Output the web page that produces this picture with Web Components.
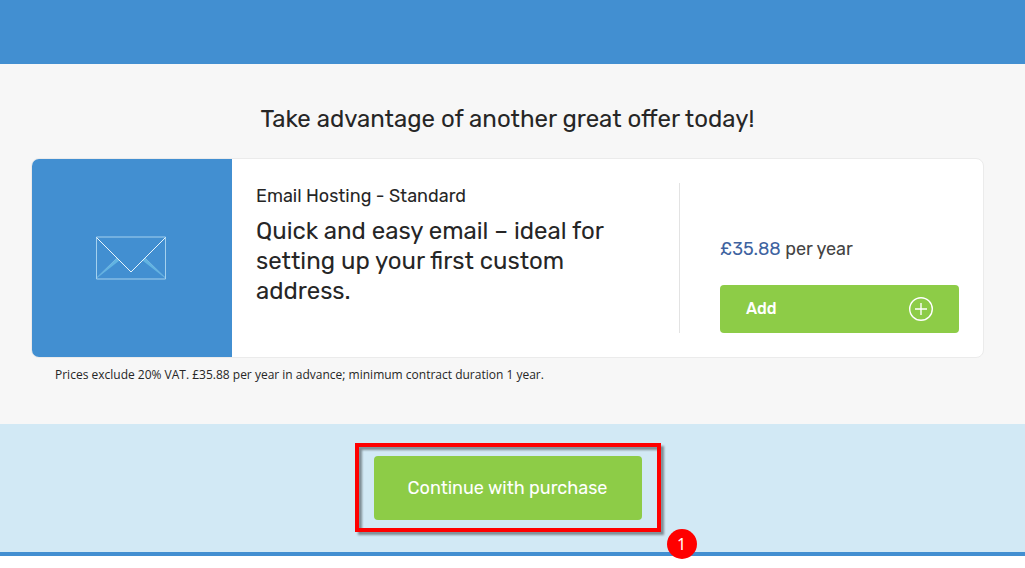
<!DOCTYPE html>
<html lang="en">
<head>
<meta charset="utf-8">
<meta name="viewport" content="width=device-width, initial-scale=1">
<title>Special offer</title>
<style>
body { margin: 0; min-height: 100vh; background: #fff; color: #262626; font-family: Rubik, Roboto, "Liberation Sans", sans-serif; }
</style>
</head>
<body>
<offer-page></offer-page>

<template id="offer-page">
  <style>
    :host { display: block; --blue: #428fd1; --green: #8dcc47; }
    header { height: 64px; background: var(--blue); }
    main { padding: 40px 41px 40px 31px; background: #f7f7f7; }
    h1 { margin: 0 0 24px; font-size: 24px; line-height: 30px; font-weight: 400; text-align: center; }
    small { display: block; margin: 8px 24px 0; font: 12px/18px "Open Sans", sans-serif; }
    footer { display: flex; justify-content: center; padding: 32px 41px 32px 31px; background: #d2e9f5; border-bottom: 4px solid var(--blue); }
  </style>
  <header></header>
  <main>
    <h1>Take advantage of another great offer today!</h1>
    <offer-card>
      <span slot="name">Email Hosting - Standard</span>
      <span slot="pitch">Quick and easy email – ideal for setting up your first custom address.</span>
      <span slot="price">£35.88</span>
    </offer-card>
    <small>Prices exclude 20% VAT. £35.88 per year in advance; minimum contract duration 1 year.</small>
  </main>
  <footer>
    <step-callout step="1"><continue-button>Continue with purchase</continue-button></step-callout>
  </footer>
</template>

<template id="offer-card">
  <style>
    :host { display: flex; min-height: 198px; background: #fff; border: 1px solid #ebebeb; border-radius: 8px; overflow: hidden; }
    .art { flex: 0 0 200px; display: flex; align-items: center; justify-content: center; background: var(--blue); }
    .art svg { display: block; margin-right: 2px; }
    .text { flex: 1; padding: 24px 64px 24px 24px; }
    h2, p { margin: 0; font-weight: 400; }
    h2 { font-size: 18px; line-height: 26px; }
    .pitch { margin-top: 7px; font-size: 24px; line-height: 30px; }
    .buy { flex: 0 0 239px; display: flex; flex-direction: column; justify-content: flex-end; gap: 24px; margin: 24px 24px 24px 0; padding-left: 40px; border-left: 1px solid #e3e3e3; }
    .price { font-size: 18px; line-height: 24px; color: #444; }
    ::slotted([slot="price"]) { color: #3e639f; }
    button { display: flex; align-items: center; justify-content: space-between; height: 48px; padding: 0 26px; border: 0; border-radius: 4px; background: var(--green); color: #fff; font: 500 16px/24px Rubik, Roboto, sans-serif; cursor: pointer; }
  </style>
  <div class="art">
    <svg width="72" height="44" viewBox="0 0 72 44" fill="none" aria-hidden="true">
      <path d="M22 22 1.500 42.500 24.500 24.500ZM50 22 70.500 42.500 47.500 24.500Z" fill="#62b4e2"/>
      <path d="M1 42.500 22 22M71 42.500 50 22" stroke="#74b9e4"/>
      <path d="M1.500 1H70.500V43H1.500Z" stroke="#a4d1ee"/>
      <path d="M1.500 1.500 36 36 70.500 1.500" stroke="#e8f5fc"/>
    </svg>
  </div>
  <div class="text">
    <h2><slot name="name"></slot></h2>
    <p class="pitch"><slot name="pitch"></slot></p>
  </div>
  <div class="buy">
    <p class="price"><slot name="price"></slot> per year</p>
    <button type="button">Add
      <svg width="24" height="24" viewBox="0 0 24 24" fill="none" stroke="#fff" stroke-width="1.400" aria-hidden="true"><circle cx="12" cy="12" r="11.300"/><path d="M12 6V18M6 12H18"/></svg>
    </button>
  </div>
</template>

<template id="continue-button">
  <style>
    :host { display: block; }
    button { display: block; height: 64px; min-width: 268px; padding: 0 32px; border: 0; border-radius: 4px; background: var(--green); color: #fff; font: 400 18px/24px Rubik, Roboto, sans-serif; cursor: pointer; }
  </style>
  <button type="button"><slot></slot></button>
</template>

<template id="step-callout">
  <style>
    :host { display: block; position: relative; }
    .frame { position: absolute; inset: -13px -19px -12px; box-sizing: border-box; border: 4px solid #f00; pointer-events: none; filter: drop-shadow(3px 3px 1px rgba(0,0,0,.4)); }
    .badge { position: absolute; left: calc(100% + 25px); top: calc(100% + 9px); width: 30px; height: 30px; border-radius: 50%; background: #f00; color: #fff; font: 16px/30px "Noto Sans", sans-serif; text-align: center; }
  </style>
  <slot></slot>
  <div class="frame"></div>
  <div class="badge"></div>
</template>

<script>
class TemplateElement extends HTMLElement {
  constructor() {
    super();
    const template = document.getElementById(this.localName);
    this.attachShadow({ mode: "open" }).append(template.content.cloneNode(true));
  }
}
class OfferPage extends TemplateElement {}
class OfferCard extends TemplateElement {}
class ContinueButton extends TemplateElement {}
class StepCallout extends TemplateElement {
  connectedCallback() {
    this.shadowRoot.querySelector(".badge").textContent = this.getAttribute("step");
  }
}
customElements.define("offer-card", OfferCard);
customElements.define("continue-button", ContinueButton);
customElements.define("step-callout", StepCallout);
customElements.define("offer-page", OfferPage);
</script>
</body>
</html>
